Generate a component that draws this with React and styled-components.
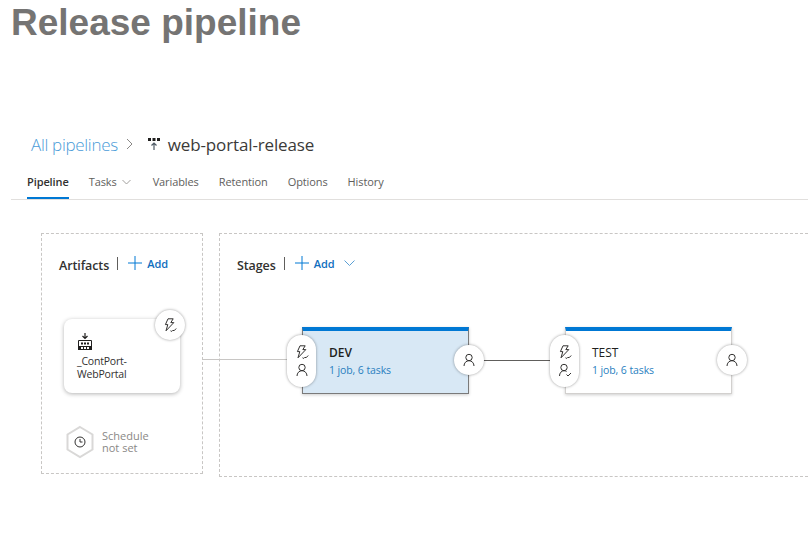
import React from "react";
import styled, { createGlobalStyle } from "styled-components";

const GlobalStyle = createGlobalStyle`
  html, body {
    margin: 0;
    padding: 0;
    background: #ffffff;
    overflow: hidden;
  }
  body {
    font-family: "Open Sans", "Liberation Sans", sans-serif;
  }
`;

const Page = styled.div`
  width: 808px;
  height: 534px;
  overflow: hidden;
`;

const Title = styled.h1`
  margin: 0;
  padding: 1px 0 0 11px;
  height: 126px;
  box-sizing: border-box;
  font-family: "Liberation Sans", Arial, sans-serif;
  font-size: 37px;
  line-height: 43px;
  font-weight: 700;
  color: #757473;
`;

const Breadcrumb = styled.div`
  display: flex;
  align-items: center;
  height: 36px;
  padding-left: 31px;
  font-size: 17px;
  letter-spacing: -0.3px;
`;

const CrumbLink = styled.span`
  color: #4a9bd8;
  font-weight: 300;
`;

const CrumbChevron = styled.svg`
  width: 10px;
  height: 12px;
  margin: 0 11px 0 8px;
  fill: none;
  stroke: #8a8886;
  stroke-width: 1;
`;

const CrumbIcon = styled.svg`
  width: 14px;
  height: 14px;
  margin-right: 7px;
  margin-top: -1px;
`;

const CrumbCurrent = styled.span`
  color: #3b3a39;
  letter-spacing: -0.14px;
`;

const Tabs = styled.nav`
  display: flex;
  margin: 2px 0 0 11px;
  padding-left: 16px;
  height: 36px;
  box-sizing: border-box;
  border-bottom: 1px solid #e1dfdd;
  gap: 20px;
`;

const Tab = styled.div`
  display: flex;
  align-items: center;
  gap: 5px;
  height: 35px;
  box-sizing: border-box;
  padding-top: 2px;
  font-size: 11px;
  letter-spacing: -0.1px;
  color: ${(props) => (props.$active ? "#323130" : "#605e5c")};
  font-weight: ${(props) => (props.$active ? 600 : 400)};
  border-bottom: 2px solid ${(props) => (props.$active ? "#0078d4" : "transparent")};
  margin-right: ${(props) => props.$extra || 0}px;
`;

const Caret = styled.svg`
  width: ${(props) => props.$size || 9}px;
  height: 6px;
  fill: none;
  stroke: ${(props) => props.$color || "#a19f9d"};
  stroke-width: 1;
`;

const Canvas = styled.div`
  display: flex;
  gap: 16px;
  margin: 33px 0 0 41px;
`;

const Panel = styled.section`
  position: relative;
  flex: none;
  width: ${(props) => props.$width}px;
  height: ${(props) => props.$height}px;
  box-sizing: border-box;
  border: 1px dashed #c8c6c4;
  ${(props) => props.$open && "border-right: none;"}
`;

const PanelHeader = styled.div`
  display: flex;
  align-items: center;
  height: 20px;
  margin-top: 21px;
  padding-left: ${(props) => props.$left}px;
`;

const PanelTitle = styled.span`
  font-size: 12.5px;
  font-weight: 600;
  color: #323130;
  letter-spacing: -0.1px;
`;

const Divider = styled.span`
  width: 1px;
  height: 13px;
  margin: 0 10px 3px 8px;
  background: #605e5c;
`;

const AddIcon = styled.svg`
  width: 14px;
  height: 14px;
  margin: -4px 5px 0 0;
  stroke: #0078d4;
  stroke-width: 1;
  fill: none;
`;

const AddLabel = styled.span`
  margin-top: -4px;
  font-size: 11px;
  font-weight: 600;
  color: #106ebe;
`;

const AddCaret = styled(Caret)`
  margin: -4px 0 0 9px;
`;

const ArtifactCard = styled.div`
  position: relative;
  width: 116px;
  height: 74px;
  margin: 44px 0 0 22px;
  padding: 14px 0 0 13px;
  box-sizing: border-box;
  border-radius: 8px;
  background: #ffffff;
  box-shadow: 0 1px 4px rgba(0, 0, 0, 0.3);
`;

const ArtifactIcon = styled.svg`
  display: block;
  width: 16px;
  height: 18px;
  margin-bottom: 4px;
`;

const ArtifactName = styled.div`
  font-size: 10.5px;
  line-height: 13px;
  color: #323130;
  letter-spacing: -0.2px;
`;

const RoundButton = styled.div`
  position: absolute;
  display: flex;
  align-items: center;
  justify-content: center;
  width: 30px;
  height: 30px;
  border-radius: 50%;
  background: #ffffff;
  box-shadow: 0 0 3px rgba(0, 0, 0, 0.4);
  ${(props) => (props.$badge ? "top: -9px; right: -5px;" : "top: 14px; right: -16px;")}
`;

const GlyphSvg = styled.svg`
  display: block;
  width: 14px;
  height: 14px;
  fill: none;
  stroke: #323130;
  stroke-width: 1;
`;

const Schedule = styled.div`
  display: flex;
  align-items: center;
  gap: 7px;
  margin: 32px 0 0 23px;
`;

const Hexagon = styled.svg`
  width: 30px;
  height: 34px;
`;

const ScheduleText = styled.div`
  font-size: 11px;
  line-height: 12px;
  color: #8a8886;
`;

const ArtifactLink = styled.div`
  position: absolute;
  left: 100%;
  top: 125px;
  width: 85px;
  height: 1px;
  background: #c8c6c4;
`;

const StageRow = styled.div`
  display: flex;
  align-items: center;
  margin: 52px 0 0 82px;
`;

const StageCard = styled.div`
  position: relative;
  flex: none;
  width: 167px;
  height: 67px;
  padding: 13px 0 0 26px;
  box-sizing: border-box;
  border-top: 4px solid #0078d4;
  border-left: 1px solid ${(props) => (props.$selected ? "#7a7a7a" : "#d2d0ce")};
  border-right: 1px solid ${(props) => (props.$selected ? "#7a7a7a" : "#d2d0ce")};
  border-bottom: 1px solid ${(props) => (props.$selected ? "#7a7a7a" : "#d2d0ce")};
  background: ${(props) => (props.$selected ? "#d8e8f5" : "#ffffff")};
  box-shadow: 0 1px 3px rgba(0, 0, 0, 0.2);
`;

const StageName = styled.div`
  font-size: 12px;
  line-height: 17px;
  font-weight: ${(props) => (props.$selected ? 600 : 400)};
  color: #201f1e;
`;

const StageMeta = styled.div`
  margin-top: 2px;
  font-size: 10.5px;
  line-height: 14px;
  letter-spacing: -0.1px;
  color: #2a7fbf;
`;

const ConditionPill = styled.div`
  position: absolute;
  top: 4px;
  left: -16px;
  display: flex;
  flex-direction: column;
  align-items: center;
  justify-content: center;
  gap: 4px;
  width: 29px;
  height: 52px;
  border-radius: 15px;
  background: #ffffff;
  box-shadow: 0 0 3px rgba(0, 0, 0, 0.4);
`;

const StageLink = styled.div`
  flex: none;
  width: 96px;
  height: 1px;
  background: #605e5c;
`;

const TriggerGlyph = () => (
  <GlyphSvg viewBox="0 0 14 14">
    <path d="M5 .8h5.200L7.800 4.600h3L3 12.800l1.800-6.200H2.400z" />
    <path d="M7.500 12.800l1.300.6 1.200-1.200 1 .6 2.200-2.300" />
  </GlyphSvg>
);

const UserGlyph = () => (
  <GlyphSvg viewBox="0 0 14 14">
    <circle cx="7" cy="4.500" r="3.200" />
    <path d="M2 13c0-3 2.200-5.300 5-5.300s5 2.300 5 5.300" />
  </GlyphSvg>
);

const UserCheckGlyph = () => (
  <GlyphSvg viewBox="0 0 14 14">
    <circle cx="6" cy="4.500" r="3.200" />
    <path d="M1.500 13c0-3 2-5.300 4.500-5.300 1 0 1.800.3 2.500.8" />
    <path d="M8.500 11.500l1.500 1.500 3-3" />
  </GlyphSvg>
);

const App = () => {
  return (
    <Page>
      <GlobalStyle />
      <Title>Release pipeline</Title>
      <Breadcrumb>
        <CrumbLink>All pipelines</CrumbLink>
        <CrumbChevron viewBox="0 0 10 12">
          <path d="M1 1l5 5-5 5" />
        </CrumbChevron>
        <CrumbIcon viewBox="0 0 14 14">
          <rect x="1" y="1" width="3" height="3" fill="#201f1e" />
          <rect x="5.500" y="1" width="3" height="3" fill="#201f1e" />
          <rect x="10" y="1" width="3" height="3" fill="#201f1e" />
          <path d="M7 13V6M4.500 8.500L7 6l2.500 2.500" fill="none" stroke="#4f5b66" strokeWidth="1.200" />
        </CrumbIcon>
        <CrumbCurrent>web-portal-release</CrumbCurrent>
      </Breadcrumb>
      <Tabs>
        <Tab $active>Pipeline</Tab>
        <Tab $extra={2}>
          Tasks
          <Caret viewBox="0 0 9 6">
            <path d="M.5 1l4 4 4-4" />
          </Caret>
        </Tab>
        <Tab>Variables</Tab>
        <Tab>Retention</Tab>
        <Tab>Options</Tab>
        <Tab>History</Tab>
      </Tabs>
      <Canvas>
        <Panel $width={162} $height={241}>
          <PanelHeader $left={17}>
            <PanelTitle>Artifacts</PanelTitle>
            <Divider />
            <AddIcon viewBox="0 0 14 14">
              <path d="M7 0v14M0 7h14" />
            </AddIcon>
            <AddLabel>Add</AddLabel>
          </PanelHeader>
          <ArtifactCard>
            <ArtifactIcon viewBox="0 0 16 18">
              <path d="M8 0v5M5.500 3L8 5.500 10.500 3" fill="none" stroke="#201f1e" strokeWidth="1.200" />
              <path d="M1.500 17V7.500h13V17" fill="none" stroke="#201f1e" />
              <rect x="4" y="9.500" width="2" height="2" fill="#201f1e" />
              <rect x="7" y="9.500" width="2" height="2" fill="#201f1e" />
              <rect x="10" y="9.500" width="2" height="2" fill="#201f1e" />
              <path d="M1 13h14v4H1z" fill="#201f1e" />
              <rect x="4" y="14" width="2" height="2" fill="#fff" />
              <rect x="7" y="14" width="2" height="2" fill="#fff" />
              <rect x="10" y="14" width="2" height="2" fill="#fff" />
            </ArtifactIcon>
            <ArtifactName>
              _ContPort-
              <br />
              WebPortal
            </ArtifactName>
            <RoundButton $badge>
              <TriggerGlyph />
            </RoundButton>
          </ArtifactCard>
          <Schedule>
            <Hexagon viewBox="0 0 30 34">
              <path d="M15 2l12.500 7.500v15L15 32 2.500 24.500v-15z" fill="#fff" stroke="#d9d8d7" strokeWidth="2" />
              <circle cx="15" cy="17" r="5" fill="none" stroke="#323130" />
              <path d="M15 14v3h2.500" fill="none" stroke="#323130" />
            </Hexagon>
            <ScheduleText>
              Schedule
              <br />
              not set
            </ScheduleText>
          </Schedule>
          <ArtifactLink />
        </Panel>
        <Panel $open $width={589} $height={244}>
          <PanelHeader $left={17}>
            <PanelTitle>Stages</PanelTitle>
            <Divider />
            <AddIcon viewBox="0 0 14 14">
              <path d="M7 0v14M0 7h14" />
            </AddIcon>
            <AddLabel>Add</AddLabel>
            <AddCaret $size={11} $color="#5a9fd4" viewBox="0 0 11 6">
              <path d="M.5.500l5 5 5-5" />
            </AddCaret>
          </PanelHeader>
          <StageRow>
            <StageCard $selected>
              <StageName $selected>DEV</StageName>
              <StageMeta>1 job, 6 tasks</StageMeta>
              <ConditionPill>
                <TriggerGlyph />
                <UserGlyph />
              </ConditionPill>
              <RoundButton>
                <UserGlyph />
              </RoundButton>
            </StageCard>
            <StageLink />
            <StageCard>
              <StageName>TEST</StageName>
              <StageMeta>1 job, 6 tasks</StageMeta>
              <ConditionPill>
                <TriggerGlyph />
                <UserCheckGlyph />
              </ConditionPill>
              <RoundButton>
                <UserGlyph />
              </RoundButton>
            </StageCard>
          </StageRow>
        </Panel>
      </Canvas>
    </Page>
  );
};

export default App;
